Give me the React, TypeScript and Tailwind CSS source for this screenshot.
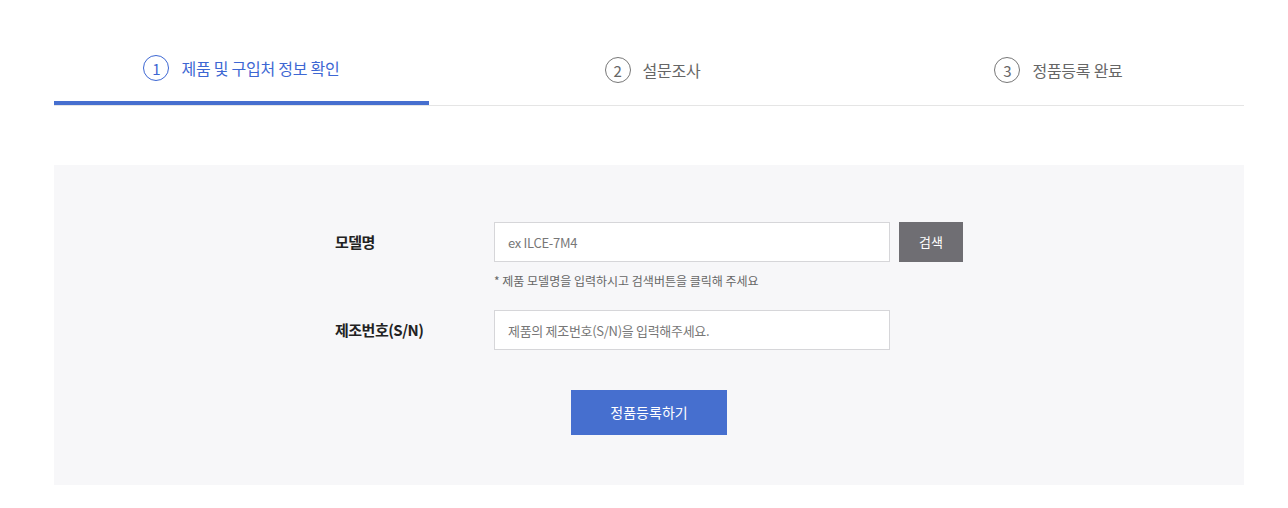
const font = { fontFamily: '"Noto Sans CJK KR", "Noto Sans", sans-serif' }

function Step({ n, label, active, className = '' }: { n: number; label: string; active?: boolean; className?: string }) {
  return (
    <div
      className={
        'flex h-[70px] w-[375px] items-center justify-center gap-[12px] ' +
        (active ? 'border-b-4 border-[#466fcf] text-[#3d67d3] ' : 'text-[#666] ') +
        className
      }
    >
      <span
        className={
          'flex h-[26px] w-[26px] items-center justify-center rounded-full border text-[15px] leading-none ' +
          (active ? 'border-[#3d67d3]' : 'border-[#777]')
        }
      >
        {n}
      </span>
      <span className="text-[16px] tracking-[-0.25px]">{label}</span>
    </div>
  )
}

export default function App() {
  return (
    <div className="min-h-[508px] bg-white pl-[54px] pt-[35px]" style={font}>
      <div className="w-[1190px]">
        <div className="flex items-end justify-between border-b border-[#e5e5e5]">
          <Step n={1} label="제품 및 구입처 정보 확인" active />
          <Step n={2} label="설문조사" className="pl-[7px]" />
          <Step n={3} label="정품등록 완료" className="pl-[4px]" />
        </div>

        <div className="mt-[59px] flex h-[320px] flex-col items-center bg-[#f7f7f9] pt-[57px]">
          <div className="w-[628px]">
            <div className="flex h-[40px] items-center">
              <label className="w-[159px] text-[15px] font-bold tracking-[-0.5px] text-[#222]">모델명</label>
              <input
                className="h-[40px] w-[396px] border border-[#d6d6d9] bg-white px-[13px] text-[13px] tracking-[-0.3px] text-[#333] outline-none placeholder:text-[#777]"
                placeholder="ex ILCE-7M4"
              />
              <button className="ml-[9px] h-[40px] w-[64px] bg-[#6f6e73] text-[13px] text-white">검색</button>
            </div>
            <p className="ml-[159px] mt-[10px] h-[18px] text-[12px] leading-[18px] text-[#666]">
              * 제품 모델명을 입력하시고 검색버튼을 클릭해 주세요
            </p>
            <div className="mt-[20px] flex h-[40px] items-center">
              <label className="w-[159px] text-[15px] font-bold tracking-[-0.5px] text-[#222]">제조번호(S/N)</label>
              <input
                className="h-[40px] w-[396px] border border-[#d6d6d9] bg-white px-[13px] text-[13px] tracking-[-0.3px] text-[#333] outline-none placeholder:text-[#777]"
                placeholder="제품의 제조번호(S/N)을 입력해주세요."
              />
            </div>
          </div>
          <button className="mt-[40px] h-[45px] w-[156px] bg-[#466fcf] text-[14px] text-white">
            정품등록하기
          </button>
        </div>
      </div>
    </div>
  )
}
